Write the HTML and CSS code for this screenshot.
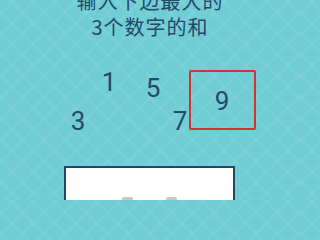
FILE: index.html
```html
<!DOCTYPE html>
<html lang="zh">
<head>
<meta charset="utf-8">
<link rel="stylesheet" href="styles.css">
</head>
<body>
<div class="page">
  <div class="title">输入下边最大的<br>3个数字的和</div>
  <div class="board">
    <span class="num n1">1</span>
    <span class="num n5">5</span>
    <span class="num n3">3</span>
    <span class="num n7">7</span>
    <span class="num n9">9</span>
    <div class="highlight"></div>
  </div>
  <div class="answer">
    <span class="mark"></span>
    <span class="mark"></span>
  </div>
</div>
</body>
</html>
```
FILE: styles.css
```css
html, body {
  margin: 0;
  padding: 0;
  width: 300px;
  height: 200px;
  overflow: hidden;
}
body {
  background-color: #70cdd3;
  background-image:
    repeating-linear-gradient(45deg, rgba(255,255,255,0) 0 12px, rgba(255,255,255,0.05) 12px 15px),
    repeating-linear-gradient(-45deg, rgba(255,255,255,0) 0 12px, rgba(255,255,255,0.05) 12px 15px);
}
.page {
  display: flex;
  flex-direction: column;
}
.title {
  margin-top: -12px;
  font-family: "Noto Sans CJK SC", "Noto Sans", sans-serif;
  font-size: 20px;
  line-height: 26px;
  letter-spacing: 1px;
  color: #24486a;
  text-align: center;
}
.board {
  position: relative;
  height: 126px;
}
.num {
  position: absolute;
  width: 20px;
  text-align: center;
  font-family: Roboto, "Liberation Sans", sans-serif;
  font-size: 26px;
  line-height: 26px;
  color: #24486a;
}
.n1 { left: 99px; top: 29px; }
.n5 { left: 143px; top: 35px; }
.n3 { left: 68px; top: 68px; }
.n7 { left: 170px; top: 68px; }
.n9 { left: 212px; top: 48px; }
.highlight {
  position: absolute;
  left: 189px;
  top: 30px;
  width: 63px;
  height: 56px;
  border: 2px solid #d2333a;
  border-radius: 2px;
}
.answer {
  margin-left: 64px;
  width: 167px;
  height: 60px;
  background: #ffffff;
  border: 2px solid #23476a;
  display: flex;
  justify-content: center;
  align-items: flex-end;
  gap: 33px;
}
.mark {
  width: 11px;
  height: 3px;
  margin-bottom: 28px;
  background: #c4c9ce;
  border-radius: 2px 2px 0 0;
}
```
